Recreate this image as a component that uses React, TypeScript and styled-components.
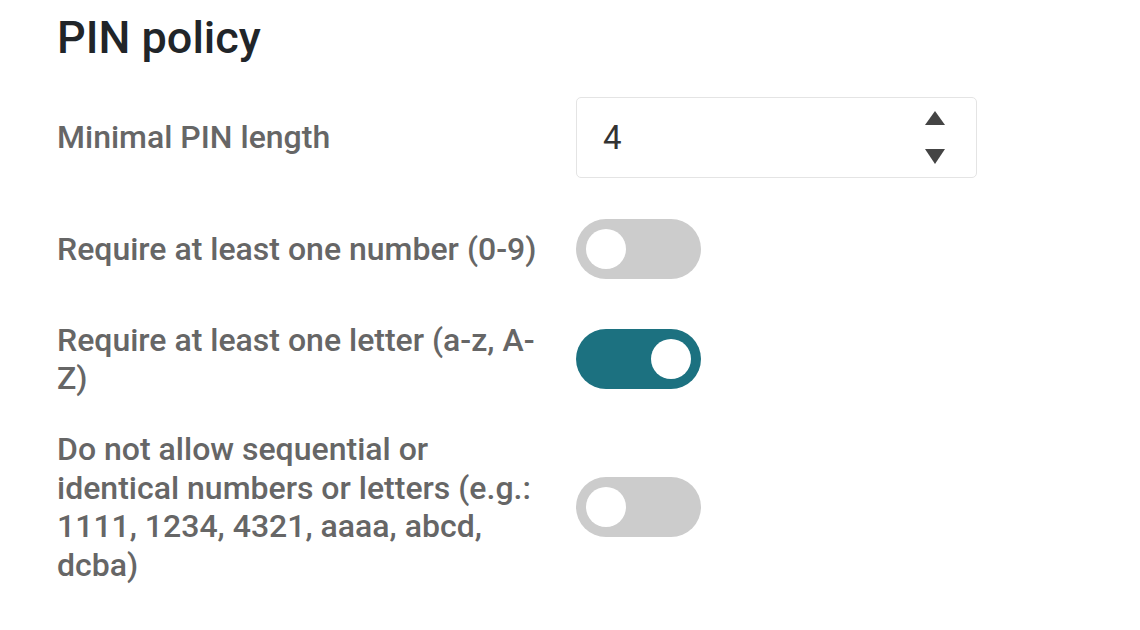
import styled, { createGlobalStyle } from "styled-components";
import { useState } from "react";

const GlobalStyle = createGlobalStyle`
  html, body {
    margin: 0;
    padding: 0;
    background: #ffffff;
  }
  body {
    font-family: Roboto, "Liberation Sans", sans-serif;
  }
`;

type Rule = {
  id: string;
  label: string;
  on: boolean;
};

const initialRules: Rule[] = [
  { id: "number", label: "Require at least one number (0-9)", on: false },
  { id: "letter", label: "Require at least one letter (a-z, A-Z)", on: true },
  {
    id: "sequence",
    label:
      "Do not allow sequential or identical numbers or letters (e.g.: 1111, 1234, 4321, aaaa, abcd, dcba)",
    on: false,
  },
];

const App = () => {
  const [length, setLength] = useState(4);
  const [rules, setRules] = useState<Rule[]>(initialRules);

  const toggle = (id: string) => {
    setRules((list) => list.map((r) => (r.id === id ? { ...r, on: !r.on } : r)));
  };

  return (
    <Page>
      <GlobalStyle />
      <Title>PIN policy</Title>
      <Row>
        <Label>Minimal PIN length</Label>
        <NumberBox>
          <NumberInput
            type="number"
            value={length}
            onChange={(e) => setLength(Number(e.target.value))}
          />
          <Spinner>
            <SpinButton onClick={() => setLength(length + 1)}>
              <svg width="20" height="14" viewBox="0 0 20 14">
                <polygon points="10,0 20,14 0,14" fill="#444" />
              </svg>
            </SpinButton>
            <SpinButton onClick={() => setLength(Math.max(0, length - 1))}>
              <svg width="20" height="15" viewBox="0 0 20 15">
                <polygon points="0,0 20,0 10,15" fill="#444" />
              </svg>
            </SpinButton>
          </Spinner>
        </NumberBox>
      </Row>
      {rules.map((r) => (
        <Row key={r.id}>
          <Label>{r.label}</Label>
          <SwitchWrap>
            <Switch $on={r.on} onClick={() => toggle(r.id)}>
              <Knob $on={r.on} />
            </Switch>
          </SwitchWrap>
        </Row>
      ))}
    </Page>
  );
};

const Page = styled.div`
  padding: 11px 0 0 57px;
`;

const Title = styled.h2`
  margin: 0 0 32px;
  font-size: 45px;
  line-height: 1.2;
  font-weight: 500;
  color: #212529;
`;

const Row = styled.div`
  display: grid;
  grid-template-columns: 490px 401px;
  column-gap: 29px;
  align-items: center;
  margin-bottom: 32px;
`;

const Label = styled.label`
  font-size: 32px;
  line-height: 38.5px;
  font-weight: 500;
  color: #666666;
`;

const NumberBox = styled.div`
  display: flex;
  align-items: center;
  height: 81px;
  box-sizing: border-box;
  border: 1px solid #e4e4e4;
  border-radius: 5px;
  padding: 0 31px 0 26px;
`;

const NumberInput = styled.input`
  flex: 1;
  min-width: 0;
  border: none;
  outline: none;
  padding: 0;
  background: transparent;
  font-family: Roboto, "Liberation Sans", sans-serif;
  font-size: 33px;
  color: #333333;
  appearance: textfield;
  -moz-appearance: textfield;

  &::-webkit-inner-spin-button,
  &::-webkit-outer-spin-button {
    -webkit-appearance: none;
    margin: 0;
  }
`;

const Spinner = styled.div`
  display: flex;
  flex-direction: column;
  gap: 24px;
`;

const SpinButton = styled.button`
  display: block;
  border: none;
  background: none;
  padding: 0;
  line-height: 0;
  cursor: pointer;
`;

const SwitchWrap = styled.div`
  padding: 9px 0;
`;

const Switch = styled.div<{ $on: boolean }>`
  display: flex;
  align-items: center;
  justify-content: ${(p) => (p.$on ? "flex-end" : "flex-start")};
  width: 125px;
  height: 60px;
  box-sizing: border-box;
  padding: 0 10px;
  border-radius: 30px;
  background: ${(p) => (p.$on ? "#1c7180" : "#cccccc")};
  cursor: pointer;
`;

const Knob = styled.span<{ $on: boolean }>`
  width: 40px;
  height: 40px;
  border-radius: 50%;
  background: #ffffff;
`;

export default App;
